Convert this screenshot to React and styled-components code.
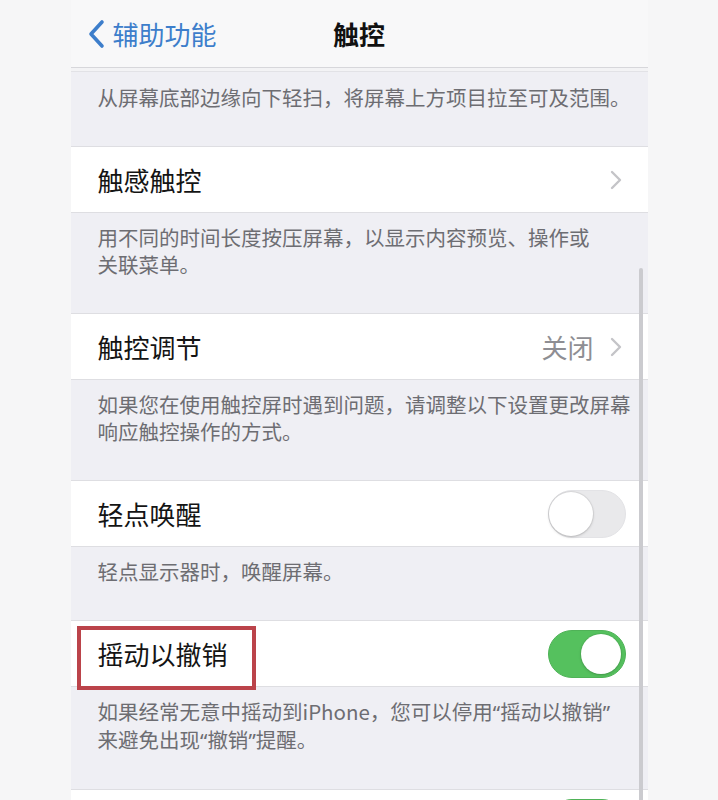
import React from "react";
import styled, { createGlobalStyle } from "styled-components";

const GlobalStyle = createGlobalStyle`
  html, body {
    margin: 0;
    padding: 0;
    background: #f6f6f7;
    font-family: "Noto Sans CJK SC", "Noto Sans", sans-serif;
  }
`;

const Page = styled.div`
  display: flex;
  justify-content: center;
  min-height: 800px;
  overflow: hidden;
`;

const Screen = styled.div`
  position: relative;
  width: 577px;
  min-height: 800px;
  background: #efeff4;
`;

const NavBar = styled.header`
  display: grid;
  grid-template-columns: 1fr auto 1fr;
  align-items: center;
  height: 67px;
  background: #f8f8f9;
  border-bottom: 1px solid #d7d7db;
`;

const Back = styled.div`
  display: flex;
  align-items: center;
  gap: 8px;
  padding-left: 16px;
  color: #3d7ecb;
  font-size: 26px;
  line-height: 1;
`;

const Title = styled.h1`
  margin: 0;
  font-size: 26px;
  font-weight: 600;
  color: #111;
`;

const Band = styled.div`
  height: 3px;
  background: #f3f3f5;
  border-bottom: 1px solid #e2e2e6;
`;

const Footer = styled.p`
  margin: 0;
  padding: ${(p) => (p.$first ? "12px" : "11px")} 10px 35px 27px;
  font-size: 20.5px;
  line-height: 27px;
  color: #6d6d72;
  white-space: nowrap;
`;

const Quote = styled.span`
  font-family: "Noto Sans", sans-serif;
`;

const Row = styled.div`
  position: relative;
  display: flex;
  align-items: center;
  justify-content: space-between;
  height: 65px;
  padding: 0 22px 0 27px;
  background: #fff;
  border-top: 1px solid #dedee2;
  border-bottom: 1px solid #dedee2;
`;

const Label = styled.span`
  font-size: 26px;
  color: #141414;
`;

const Detail = styled.div`
  display: flex;
  align-items: center;
  gap: 16px;
  padding-right: 4px;
  font-size: 26px;
  color: #8e8e93;
`;

const Switch = styled.div`
  position: relative;
  width: 78px;
  height: 48px;
  border-radius: 24px;
  box-sizing: border-box;
  background: ${(p) => (p.$on ? "#55c15e" : "#e9e9eb")};
  border: 1px solid ${(p) => (p.$on ? "#4fb257" : "#e3e3e6")};

  &::after {
    content: "";
    position: absolute;
    top: ${(p) => (p.$on ? "3px" : "1px")};
    left: ${(p) => (p.$on ? "32px" : "0")};
    width: ${(p) => (p.$on ? "40px" : "44px")};
    height: ${(p) => (p.$on ? "40px" : "44px")};
    border-radius: 50%;
    background: #fff;
    box-shadow: 0 1px 3px rgba(0, 0, 0, 0.18), 0 0 0 1px rgba(0, 0, 0, 0.05);
  }
`;

const Highlight = styled.div`
  position: absolute;
  left: 6px;
  top: 5px;
  width: 179px;
  height: 64px;
  box-sizing: border-box;
  border: 4px solid #bb434a;
  pointer-events: none;
`;

const ScrollBar = styled.div`
  position: absolute;
  left: 568px;
  top: 268px;
  bottom: 0;
  width: 4px;
  border-radius: 2px;
  background: #cbcbcf;
`;

const Chevron = () => (
  <svg width="12" height="20" viewBox="0 0 12 20">
    <path d="M2 2 L10 10 L2 18" fill="none" stroke="#c4c4c8" strokeWidth="2.4" strokeLinecap="round" strokeLinejoin="round" />
  </svg>
);

const BackChevron = () => (
  <svg width="18" height="30" viewBox="0 0 18 30">
    <path d="M15 3 L4 15 L15 27" fill="none" stroke="#3d7ecb" strokeWidth="3.6" strokeLinecap="round" strokeLinejoin="round" />
  </svg>
);

export default function App() {
  return (
    <>
      <GlobalStyle />
      <Page>
        <Screen>
          <NavBar>
            <Back>
              <BackChevron />
              辅助功能
            </Back>
            <Title>触控</Title>
            <div />
          </NavBar>
          <Band />

          <Footer $first>从屏幕底部边缘向下轻扫，将屏幕上方项目拉至可及范围。</Footer>

          <Row>
            <Label>触感触控</Label>
            <Detail>
              <Chevron />
            </Detail>
          </Row>
          <Footer>
            用不同的时间长度按压屏幕，以显示内容预览、操作或
            <br />
            关联菜单。
          </Footer>

          <Row>
            <Label>触控调节</Label>
            <Detail>
              关闭
              <Chevron />
            </Detail>
          </Row>
          <Footer>
            如果您在使用触控屏时遇到问题，请调整以下设置更改屏幕
            <br />
            响应触控操作的方式。
          </Footer>

          <Row>
            <Label>轻点唤醒</Label>
            <Switch />
          </Row>
          <Footer>轻点显示器时，唤醒屏幕。</Footer>

          <Row>
            <Label>摇动以撤销</Label>
            <Switch $on />
            <Highlight />
          </Row>
          <Footer>
            如果经常无意中摇动到iPhone，您可以停用<Quote>“</Quote>摇动以撤销<Quote>”</Quote>
            <br />
            来避免出现<Quote>“</Quote>撤销<Quote>”</Quote>提醒。
          </Footer>

          <Row>
            <span />
            <Switch $on />
          </Row>

          <ScrollBar />
        </Screen>
      </Page>
    </>
  );
}
